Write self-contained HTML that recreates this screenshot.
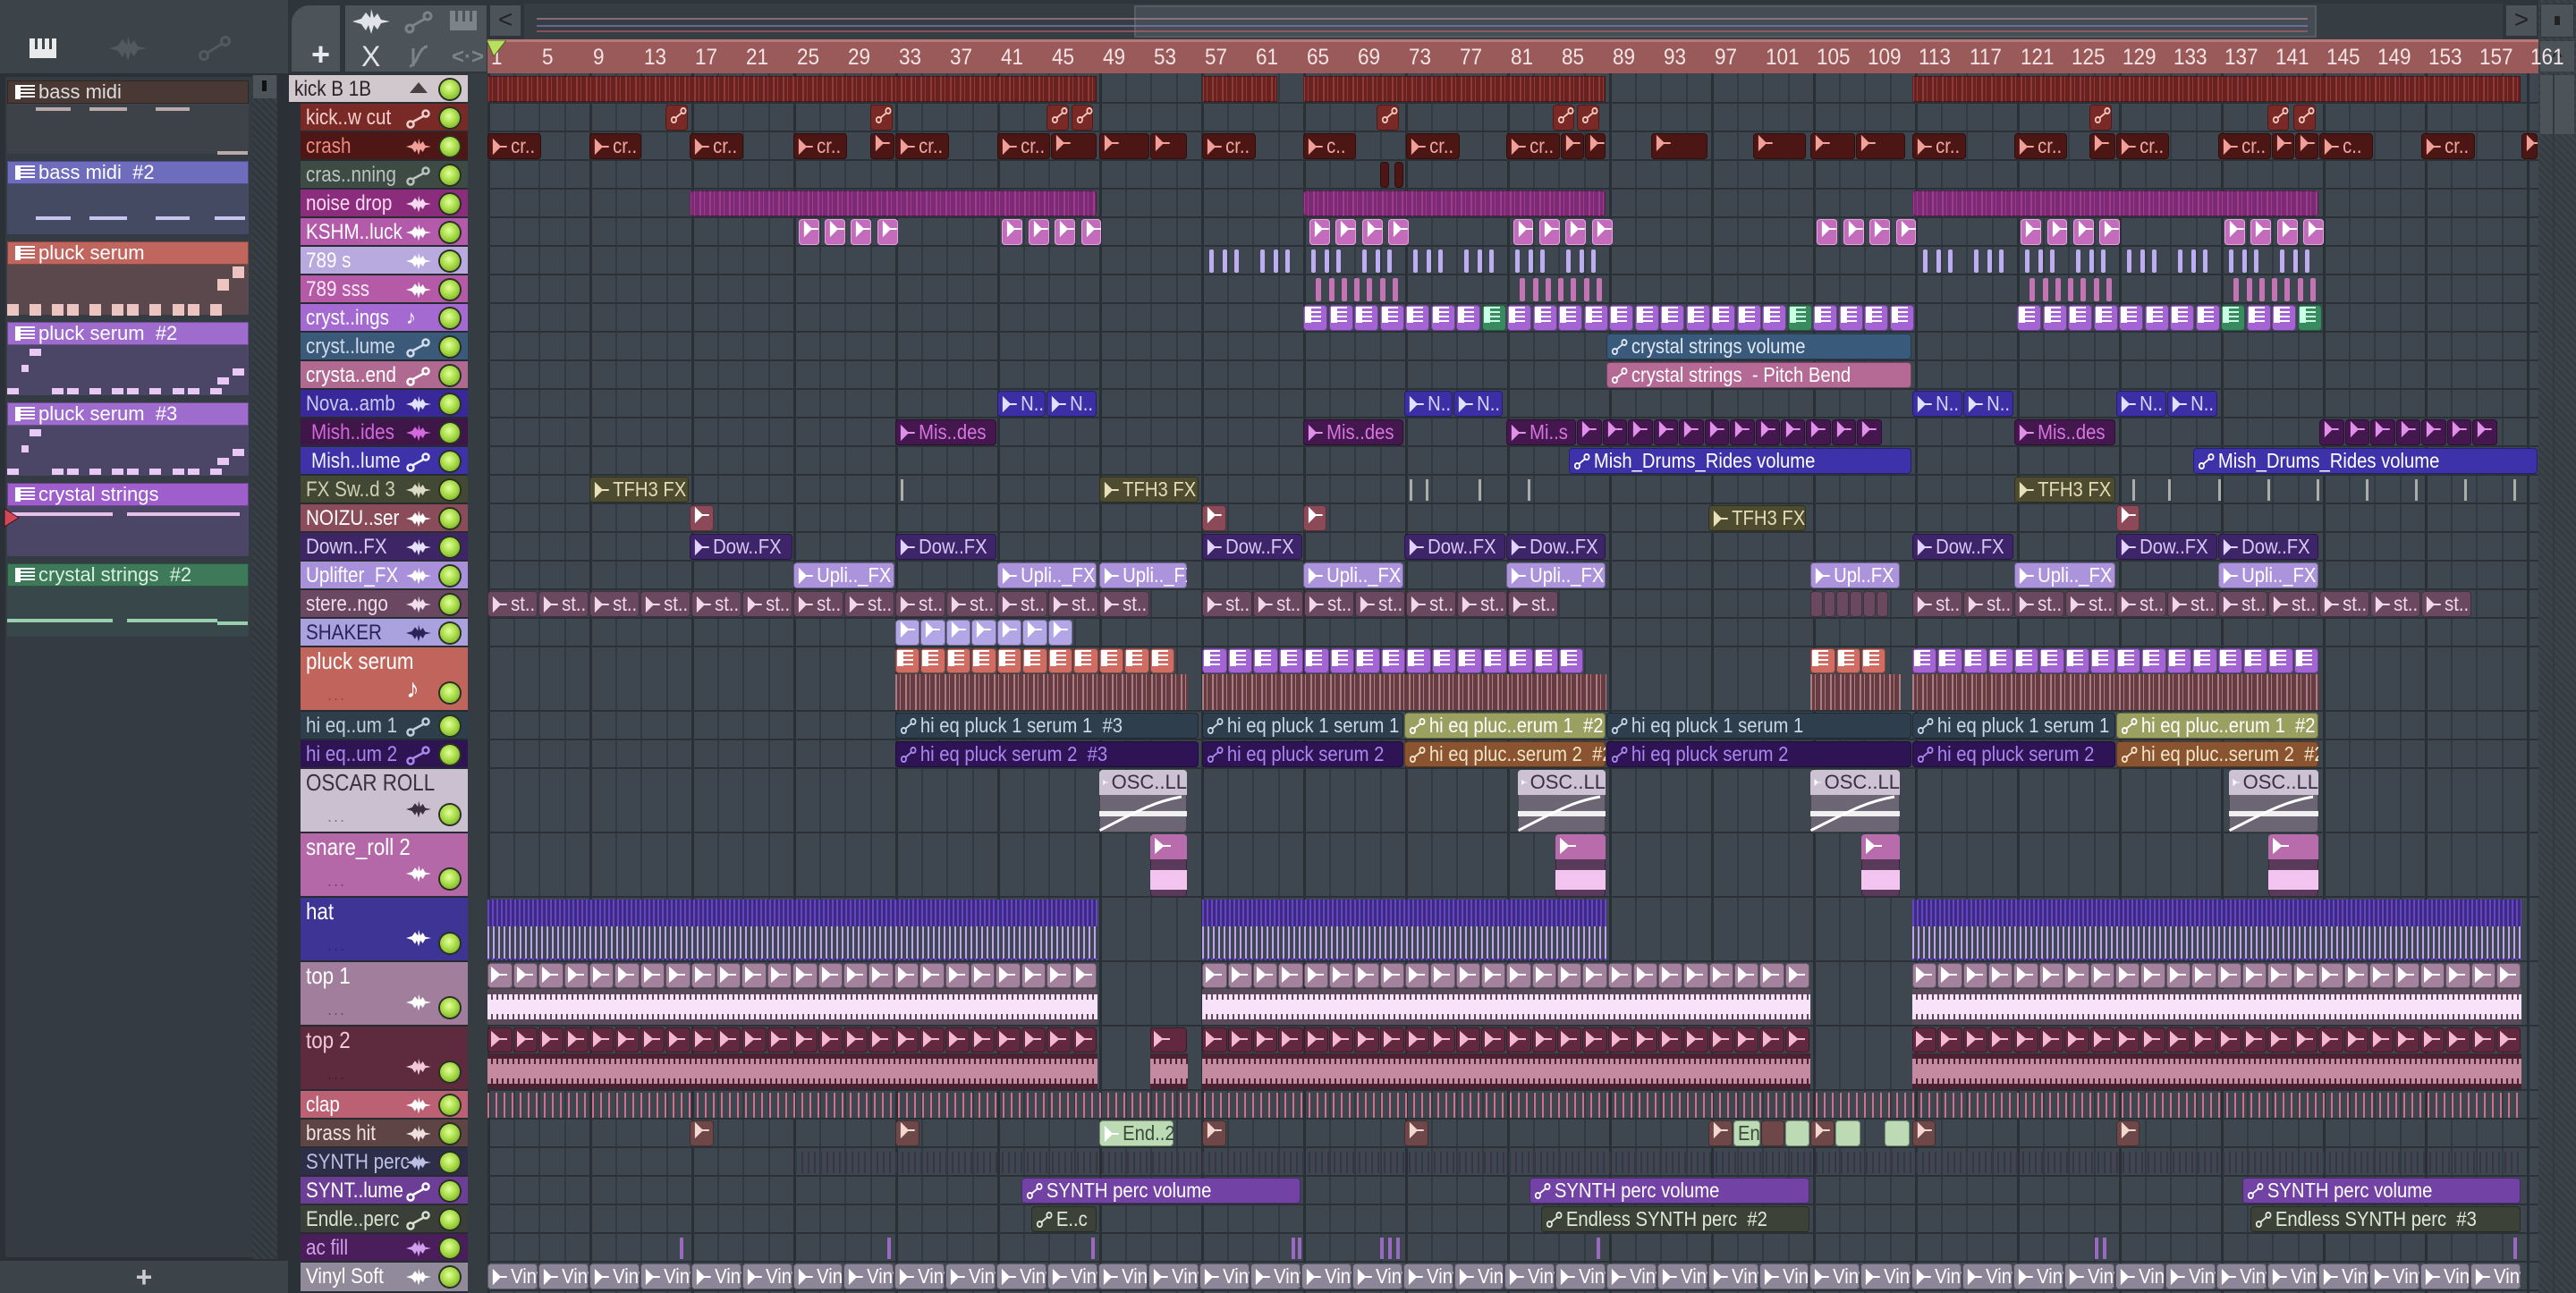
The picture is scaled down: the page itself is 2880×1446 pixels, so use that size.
<!DOCTYPE html>
<html><head><meta charset="utf-8">
<style>
*{box-sizing:border-box;margin:0;padding:0}
body{width:2880px;height:1446px;overflow:hidden;background:#2e353b;font-family:"Liberation Sans",sans-serif;position:relative}
.a{position:absolute}
.c{position:absolute;border-radius:4px;overflow:hidden;white-space:nowrap;box-shadow:inset 0 0 0 1px rgba(0,0,0,.35)}
.lb{position:absolute;left:5px;top:2px;font-size:23px;line-height:25px;display:flex;align-items:center;gap:4px;transform:scaleX(.88);transform-origin:0 50%}
.hd{position:absolute;left:336px;width:187px;border-bottom:2px solid #262c31;overflow:hidden}
.hd .n{position:absolute;left:6px;top:2px;font-size:24px;line-height:27px;white-space:nowrap;transform:scaleX(.86);transform-origin:0 50%}
.hd .i{position:absolute;left:118px;top:6px}
.hd .g{position:absolute;left:156px;top:5px;width:22px;height:22px;border-radius:50%;background:radial-gradient(circle at 45% 40%,#e4ff9c 0,#a8dc48 45%,#6a9e1e 100%);box-shadow:0 0 0 2px #2a3024}
.tall .i{top:auto;bottom:10px}.tall .g{top:auto;bottom:8px}
.tall .n{font-size:26px}
.tall .d{position:absolute;left:30px;bottom:6px;font-size:18px;letter-spacing:2px;opacity:.5}
.pt{position:absolute;left:8px;width:270px;height:82px;border-radius:2px}
.pt .h{height:26px;border:1px solid rgba(0,0,0,.3);font-size:22px;line-height:24px;padding-left:34px;color:#fff;position:relative}
.pt .h:before{content:"";position:absolute;left:8px;top:4px;width:16px;height:16px;background:repeating-linear-gradient(#fff 0 2px,transparent 2px 4px);border-left:6px solid #fff}
.nt{position:absolute;height:5px}
</style></head><body>

<!-- top-left toolbar -->
<div class="a" style="left:0;top:0;width:322px;height:82px;background:#3c4349"></div>
<div class="a" style="left:33px;top:43px;width:30px;height:22px;background:#e8eaec"></div>
<div class="a" style="left:39px;top:43px;width:3px;height:12px;background:#3c4349"></div>
<div class="a" style="left:47px;top:43px;width:3px;height:12px;background:#3c4349"></div>
<div class="a" style="left:55px;top:43px;width:3px;height:12px;background:#3c4349"></div>
<svg class="a" style="left:122px;top:40px" width="42" height="28" viewBox="0 0 42 28"><path d="M0 14 L10 11 L15 4 L20 10 L21 0 L24 10 L28 5 L32 12 L42 14 L32 16 L28 23 L24 18 L21 28 L18 18 L15 24 L10 17Z" fill="#525a60"/></svg>
<svg class="a" style="left:222px;top:40px" width="36" height="28"><circle cx="6" cy="22" r="4.5" fill="none" stroke="#525a60" stroke-width="3"/><circle cx="30" cy="6" r="4.5" fill="none" stroke="#525a60" stroke-width="3"/><path d="M10 19 L26 9" stroke="#525a60" stroke-width="3"/></svg>

<!-- tabs -->
<div class="a" style="left:324px;top:4px;width:58px;height:78px;background:#4c545a;border-radius:22px 0 0 0;border:2px solid #2e353b"></div>
<div class="a" style="left:348px;top:46px;font-size:36px;color:#e8eaec;line-height:30px;font-weight:bold">+</div>
<div class="a" style="left:384px;top:4px;width:162px;height:78px;background:#4c545a;border:2px solid #2e353b"></div>
<svg class="a" style="left:394px;top:10px" width="42" height="28" viewBox="0 0 42 28"><path d="M0 14 L10 11 L15 4 L20 10 L21 0 L24 10 L28 5 L32 12 L42 14 L32 16 L28 23 L24 18 L21 28 L18 18 L15 24 L10 17Z" fill="#e0e4e8"/></svg>
<svg class="a" style="left:452px;top:12px" width="32" height="26"><circle cx="6" cy="20" r="4" fill="none" stroke="#7c848a" stroke-width="3"/><circle cx="26" cy="6" r="4" fill="none" stroke="#7c848a" stroke-width="3"/><path d="M9 17 L23 9" stroke="#7c848a" stroke-width="3"/></svg>
<div class="a" style="left:503px;top:12px;width:30px;height:22px;background:#7c848a"></div>
<div class="a" style="left:509px;top:12px;width:3px;height:12px;background:#4c545a"></div><div class="a" style="left:517px;top:12px;width:3px;height:12px;background:#4c545a"></div><div class="a" style="left:525px;top:12px;width:3px;height:12px;background:#4c545a"></div>
<div class="a" style="left:404px;top:48px;font-size:32px;color:#e0e4e8;line-height:30px">X</div>
<svg class="a" style="left:456px;top:50px" width="24" height="26"><path d="M2 24 C10 24 12 2 22 2 M6 4 V24" stroke="#7c848a" stroke-width="3" fill="none"/></svg>
<div class="a" style="left:505px;top:50px;font-size:24px;color:#7c848a;font-weight:bold">&lt;·&gt;</div>

<!-- overview strip -->
<div class="a" style="left:546px;top:4px;width:38px;height:38px;background:#4c545a;border:2px solid #2e353b;color:#222;font-size:28px;text-align:center;line-height:32px">&lt;</div>
<div class="a" style="left:586px;top:4px;width:2212px;height:40px;background:#363d43"></div>
<div class="a" style="left:1268px;top:6px;width:1322px;height:36px;background:#454d54;border:2px solid #565e64"></div>
<div class="a" style="left:600px;top:20px;width:1980px;height:2px;background:#b88aa8;opacity:.6"></div>
<div class="a" style="left:600px;top:28px;width:1980px;height:2px;background:#9080c8;opacity:.6"></div>
<div class="a" style="left:600px;top:34px;width:1980px;height:2px;background:#c06070;opacity:.6"></div>
<div class="a" style="left:2800px;top:4px;width:38px;height:38px;background:#4c545a;border:2px solid #2e353b;color:#222;font-size:28px;text-align:center;line-height:32px">&gt;</div>
<!-- right scrollbar -->
<div class="a" style="left:2838px;top:0;width:42px;height:1446px;background:repeating-linear-gradient(45deg,#353c42 0 3px,#3c4349 3px 6px)"></div>
<div class="a" style="left:2840px;top:4px;width:38px;height:38px;background:#4c545a;border:1px solid #2e353b"></div>
<div class="a" style="left:2856px;top:18px;width:6px;height:10px;background:#222"></div>
<div class="a" style="left:2840px;top:46px;width:38px;height:34px;background:#4c545a;color:#222;font-size:24px;text-align:center;line-height:38px">^</div>
<div class="a" style="left:2840px;top:84px;width:38px;height:66px;background:#4c545a"></div>

<!-- ruler -->
<div class="a" style="left:545px;top:44px;width:2293px;height:38px;background:#9a5a5a;border-top:3px solid #b87876"></div>
<div id="rul"></div>
<svg class="a" style="left:544px;top:45px" width="22" height="18"><path d="M0 0 H22 L8 18 Z" fill="#b8e060" stroke="#4a6020"/></svg>

<!-- grid area -->
<div class="a" style="left:523px;top:82px;width:22px;height:1364px;background:#353c42"></div>
<div id="grid" class="a" style="left:545px;top:82px;width:2293px;height:1364px;background:#3e474f"></div>

<!-- left pattern panel -->
<div class="a" style="left:0;top:82px;width:322px;height:1328px;background:#2a3036"></div>
<div class="a" style="left:6px;top:86px;width:276px;height:1320px;background:#343b42"></div>
<div class="a" style="left:282px;top:84px;width:28px;height:1324px;background:repeating-linear-gradient(45deg,#30373d 0 3px,#383f45 3px 6px)"></div>
<div class="a" style="left:283px;top:84px;width:26px;height:26px;background:#4c545a"></div>
<div class="a" style="left:293px;top:90px;width:5px;height:12px;background:#111"></div>
<div class="pt" style="top:90px;background:#3c4248"><div class="h" style="background:#4a3834;color:#ddd">bass midi</div></div>
<div class="pt" style="top:180px;background:#434a62"><div class="h" style="background:#6e6cbc">bass midi &nbsp;#2</div></div>
<div class="pt" style="top:270px;background:#5a484c"><div class="h" style="background:#c0665e">pluck serum</div></div>
<div class="pt" style="top:360px;background:#4c4666"><div class="h" style="background:#9e6ccc">pluck serum &nbsp;#2</div></div>
<div class="pt" style="top:450px;background:#4c4666"><div class="h" style="background:#9e6ccc">pluck serum &nbsp;#3</div></div>
<div class="pt" style="top:540px;background:#4c4666"><div class="h" style="background:#9e5ecc">crystal strings</div></div>
<div class="pt" style="top:630px;background:#38484a"><div class="h" style="background:#3e7a5a;color:#d8f0e0">crystal strings &nbsp;#2</div></div>
<div id="pnotes"></div>
<svg class="a" style="left:4px;top:568px" width="18" height="22"><path d="M1 1 L17 11 L1 21Z" fill="#d04858" stroke="#401018"/></svg>
<div class="a" style="left:0;top:1410px;width:322px;height:36px;background:#3c4349;color:#c8ccd0;font-size:32px;text-align:center;line-height:36px;font-weight:bold">+</div>

<!-- header column -->
<div class="a" style="left:322px;top:82px;width:14px;height:1364px;background:#2b3237"></div>

<div class="hd" style="top:84px;height:32px;left:323px;width:200px;background:#d0c8cc"><div class="n" style="color:#2a2428">kick B 1B</div><div class="i" style="left:135px;top:8px;width:0;height:0;border-left:10px solid transparent;border-right:10px solid transparent;border-bottom:12px solid #4a4044"></div><div class="g" style="left:169px"></div></div>
<div class="hd" style="top:116px;height:32px;background:#7a2a26"><div class="n" style="color:#f4d0cc">kick..w cut</div><div class="i" data-t="a" style="color:#f4d0cc"></div><div class="g"></div></div>
<div class="hd" style="top:148px;height:32px;background:#4e1614"><div class="n" style="color:#f08a80">crash</div><div class="i" data-t="w" style="color:#f0a098"></div><div class="g"></div></div>
<div class="hd" style="top:180px;height:32px;background:#3e4a44"><div class="n" style="color:#b8c4bc">cras..nning</div><div class="i" data-t="a" style="color:#b8c4bc"></div><div class="g"></div></div>
<div class="hd" style="top:212px;height:32px;background:#8c2c7c"><div class="n" style="color:#f8d8f0">noise drop</div><div class="i" data-t="w" style="color:#f8d8f0"></div><div class="g"></div></div>
<div class="hd" style="top:244px;height:32px;background:#b45aaa"><div class="n" style="color:#fff">KSHM..luck</div><div class="i" data-t="w" style="color:#fff"></div><div class="g"></div></div>
<div class="hd" style="top:276px;height:32px;background:#b8aade"><div class="n" style="color:#fff">789 s</div><div class="i" data-t="w" style="color:#fff"></div><div class="g"></div></div>
<div class="hd" style="top:308px;height:32px;background:#b45aa6"><div class="n" style="color:#fce8f8">789 sss</div><div class="i" data-t="w" style="color:#fff"></div><div class="g"></div></div>
<div class="hd" style="top:340px;height:32px;background:#a46ad2"><div class="n" style="color:#fff">cryst..ings</div><div class="i" style="color:#fff;font-size:22px;top:2px">♪</div><div class="g"></div></div>
<div class="hd" style="top:372px;height:32px;background:#3b5a7a"><div class="n" style="color:#d0dcea">cryst..lume</div><div class="i" data-t="a" style="color:#d0dcea"></div><div class="g"></div></div>
<div class="hd" style="top:404px;height:32px;background:#b06a92"><div class="n" style="color:#fff">crysta..end</div><div class="i" data-t="a" style="color:#fff"></div><div class="g"></div></div>
<div class="hd" style="top:436px;height:32px;background:#38289a"><div class="n" style="color:#c8ccf4">Nova..amb</div><div class="i" data-t="w" style="color:#e0e0ff"></div><div class="g"></div></div>
<div class="hd" style="top:468px;height:32px;background:#3e1648"><div class="n" style="color:#d468dc;left:12px">Mish..ides</div><div class="i" data-t="w" style="color:#d468dc"></div><div class="g"></div></div>
<div class="hd" style="top:500px;height:32px;background:#3e32a8"><div class="n" style="color:#f0f0ff;left:12px">Mish..lume</div><div class="i" data-t="a" style="color:#f0f0ff"></div><div class="g"></div></div>
<div class="hd" style="top:532px;height:32px;background:#434834"><div class="n" style="color:#cfd0b4">FX Sw..d 3</div><div class="i" data-t="w" style="color:#dcdcc4"></div><div class="g"></div></div>
<div class="hd" style="top:564px;height:32px;background:#8a4c58"><div class="n" style="color:#fff">NOIZU..ser</div><div class="i" data-t="w" style="color:#fff"></div><div class="g"></div></div>
<div class="hd" style="top:596px;height:32px;background:#3e2666"><div class="n" style="color:#d8ccf4">Down..FX</div><div class="i" data-t="w" style="color:#e8e0ff"></div><div class="g"></div></div>
<div class="hd" style="top:628px;height:32px;background:#a890da"><div class="n" style="color:#fff">Uplifter_FX</div><div class="i" data-t="w" style="color:#fff"></div><div class="g"></div></div>
<div class="hd" style="top:660px;height:32px;background:#6a4862"><div class="n" style="color:#f0dcea">stere..ngo</div><div class="i" data-t="w" style="color:#f0dcea"></div><div class="g"></div></div>
<div class="hd" style="top:692px;height:32px;background:#aaa2de"><div class="n" style="color:#2a2458">SHAKER</div><div class="i" data-t="w" style="color:#2a2458"></div><div class="g"></div></div>
<div class="hd tall" style="top:724px;height:72px;background:#c0645c"><div class="n" style="color:#fff">pluck serum</div><div class="i" style="color:#fff;font-size:30px;bottom:6px">♪</div><div class="d" style="color:#6a2a28">...</div><div class="g"></div></div>
<div class="hd" style="top:796px;height:32px;background:#2e3e4a"><div class="n" style="color:#c0d0dc">hi eq..um 1</div><div class="i" data-t="a" style="color:#c0d0dc"></div><div class="g"></div></div>
<div class="hd" style="top:828px;height:32px;background:#2e1452"><div class="n" style="color:#a888ec">hi eq..um 2</div><div class="i" data-t="a" style="color:#a888ec"></div><div class="g"></div></div>
<div class="hd tall" style="top:860px;height:72px;background:#cbc0d0"><div class="n" style="color:#3a3040">OSCAR ROLL</div><div class="i" data-t="w" style="color:#3a3040"></div><div class="d" style="color:#3a3040">...</div><div class="g"></div></div>
<div class="hd tall" style="top:932px;height:72px;background:#b468a8"><div class="n" style="color:#fff">snare_roll 2</div><div class="i" data-t="w" style="color:#fff"></div><div class="d" style="color:#3a1a3a">...</div><div class="g"></div></div>
<div class="hd tall" style="top:1004px;height:72px;background:#3e3496"><div class="n" style="color:#fff">hat</div><div class="i" data-t="w" style="color:#fff"></div><div class="d" style="color:#1a1450">...</div><div class="g"></div></div>
<div class="hd tall" style="top:1076px;height:72px;background:#a07e9c"><div class="n" style="color:#fff">top 1</div><div class="i" data-t="w" style="color:#fff"></div><div class="d" style="color:#3a2a3a">...</div><div class="g"></div></div>
<div class="hd tall" style="top:1148px;height:72px;background:#5e2a3e"><div class="n" style="color:#f0c8d8">top 2</div><div class="i" data-t="w" style="color:#f0c8d8"></div><div class="d" style="color:#2a0a1a">...</div><div class="g"></div></div>
<div class="hd" style="top:1220px;height:32px;background:#bc6074"><div class="n" style="color:#fff">clap</div><div class="i" data-t="w" style="color:#fff"></div><div class="g"></div></div>
<div class="hd" style="top:1252px;height:32px;background:#5e4444"><div class="n" style="color:#f0e0dc">brass hit</div><div class="i" data-t="w" style="color:#f0e0dc"></div><div class="g"></div></div>
<div class="hd" style="top:1284px;height:32px;background:#2e2e48"><div class="n" style="color:#bcc0e4">SYNTH perc</div><div class="i" data-t="w" style="color:#bcc0e4"></div><div class="g"></div></div>
<div class="hd" style="top:1316px;height:32px;background:#6c3e96"><div class="n" style="color:#fff">SYNT..lume</div><div class="i" data-t="a" style="color:#fff"></div><div class="g"></div></div>
<div class="hd" style="top:1348px;height:32px;background:#3a4038"><div class="n" style="color:#d8e0d0">Endle..perc</div><div class="i" data-t="a" style="color:#d8e0d0"></div><div class="g"></div></div>
<div class="hd" style="top:1380px;height:32px;background:#4a1e5a"><div class="n" style="color:#d0a0ec">ac fill</div><div class="i" data-t="w" style="color:#d0a0ec"></div><div class="g"></div></div>
<div class="hd" style="top:1412px;height:34px;background:#908a9a"><div class="n" style="color:#fff">Vinyl Soft</div><div class="i" data-t="w" style="color:#fff"></div><div class="g"></div></div>

<div id="clips"></div>

<script>
const S=1.8367;
const WAVE='<svg width="28" height="20" viewBox="0 0 42 28"><path d="M0 14 L10 11 L15 4 L20 10 L21 0 L24 10 L28 5 L32 12 L42 14 L32 16 L28 23 L24 18 L21 28 L18 18 L15 24 L10 17Z" fill="currentColor"/></svg>';
const AUT='<svg width="28" height="22"><circle cx="5" cy="17" r="3.5" fill="none" stroke="currentColor" stroke-width="2.5"/><circle cx="22" cy="5" r="3.5" fill="none" stroke="currentColor" stroke-width="2.5"/><path d="M8 14 L19 8" stroke="currentColor" stroke-width="2.5"/></svg>';
document.querySelectorAll('.i[data-t]').forEach(e=>{e.innerHTML=e.dataset.t=='w'?WAVE:AUT;});
function si(c){return '<svg width="20" height="18" viewBox="0 0 20 18"><path d="M2 2 L2 16 L10 9 Z M10 9 H19" fill="'+c+'" stroke="'+c+'" stroke-width="2"/></svg>'}
function ai(c){return '<svg width="22" height="20"><circle cx="5" cy="15" r="3" fill="none" stroke="'+c+'" stroke-width="2"/><circle cx="17" cy="5" r="3" fill="none" stroke="'+c+'" stroke-width="2"/><path d="M7 13 L15 7" stroke="'+c+'" stroke-width="2"/></svg>'}
function pi(c){return '<div style="width:18px;height:18px;margin:2px;background:repeating-linear-gradient('+c+' 0 2px,transparent 2px 5px);border-left:7px solid '+c+'"></div>'}
let R='';
for(let n=1;n<=161;n+=4){const x=545+(n-1)*14.25;R+='<div class="a" style="left:'+(x+4)+'px;top:51px;font-size:25px;color:#f4e4e4;line-height:27px;transform:scaleX(.9);transform-origin:0 0">'+n+'</div>';}
document.getElementById('rul').innerHTML=R;
const hs=[];for(let i=0;i<20;i++)hs.push(32);hs.push(72,32,32,72,72,72,72,72);for(let i=0;i<7;i++)hs.push(32);
const tops=[];let yy=84;hs.forEach(h=>{tops.push(yy);yy+=h;});
let G='';
for(let k=0;k<=81;k++){const x=k*28.5;G+='<div class="a" style="left:'+Math.round(x)+'px;top:0;width:'+(k%4==0?3:2)+'px;height:1364px;background:'+(k%4==0?'#283036':'#323a41')+'"></div>';}
tops.forEach((t,i)=>{G+='<div class="a" style="left:0;top:'+(t+hs[i]-84)+'px;width:2293px;height:2px;background:#2a3137"></div>';});
document.getElementById('grid').innerHTML=G;
let H='';
function X(xd){return Math.round(xd*S)}
function clip(r,x1,x2,bg,o){o=o||{};const y=tops[r]+1,h=hs[r]-3;const L=X(x1),W=X(x2)-L-1;
 H+='<div class="c" style="left:'+L+'px;top:'+y+'px;width:'+W+'px;height:'+h+'px;background:'+bg+';'+(o.st||'')+'">'+(o.in||'')+(o.lab!==undefined?'<div class="lb" style="color:'+(o.lc||'#fff')+'">'+(o.ic||'')+o.lab+'</div>':'')+'</div>';}
function run(r,a,b,w,f){for(let x=a;x+w<=b+0.5;x+=w)f(x,Math.min(x+w,b));}
const stripe=(c1,c2)=>'background-image:repeating-linear-gradient(90deg,'+c2+' 0 2px,transparent 2px 5px,'+c2+' 5px 6px,transparent 6px 11px);background-color:'+c1;
[[297,668],[732,778],[793,978],[1164,1535]].forEach(p=>clip(0,p[0],p[1],'#6a2220',{st:stripe('#6a2220','#8e3a36')+';border-radius:0'}));
[405,530,637,652,838,945,960,1272,1380,1396].forEach(x=>clip(1,x,x+14,'#7a2a26',{lab:'',ic:ai('#f4c8c0'),lc:'#fff'}));
[[297,330,'cr..'],[359,391,'cr..'],[420,453,'cr..'],[483,516,'cr..'],[530,545,''],[545,578,'cr..'],[607,640,'cr..'],[640,668,''],[669,700,''],[700,723,''],[732,765,'cr..'],[793,826,'c..'],[856,889,'cr..'],[917,950,'cr..'],[950,965,''],[965,978,''],[1005,1040,''],[1067,1100,''],[1102,1130,''],[1130,1160,''],[1164,1197,'cr..'],[1226,1259,'cr..'],[1272,1288,''],[1288,1321,'cr..'],[1350,1383,'cr..'],[1383,1397,''],[1397,1412,''],[1412,1445,'c..'],[1474,1507,'cr..'],[1535,1545,'']].forEach(p=>clip(2,p[0],p[1],'#4c1614',{lab:p[2],ic:si('#f0a098'),lc:'#f0a8a0'}));
clip(3,840,846,'#4c1614');clip(3,849,855,'#4c1614');
[[420,668],[793,978],[1164,1412]].forEach(p=>clip(4,p[0],p[1],'#7c2a72',{st:stripe('#7c2a72','#9c3c90')}));
[486,502,518,534,610,626,642,658,797,813,829,845,921,937,953,969,1106,1122,1138,1154,1230,1246,1262,1278,1354,1370,1386,1402].forEach(x=>clip(5,x,x+13,'#c46cbc',{lab:'',ic:si('#fff'),st:'box-shadow:inset 0 0 0 1px #e8a0e0'}));
[57,61,65,69,73,77,81,85,113,117,121,125,129,133,137,141].forEach(b=>{[0.65,1.65,2.6].forEach(o=>{const x=545+(b-1+o)*14.25;H+='<div class="a" style="left:'+Math.round(x)+'px;top:'+(tops[6]+3)+'px;width:5px;height:26px;background:#bcaef0;border-radius:2px"></div>';});});
[66,82,122,138].forEach(b=>{for(let k=0;k<7;k++){const x=545+(b-1+k)*14.25;H+='<div class="a" style="left:'+Math.round(x)+'px;top:'+(tops[7]+3)+'px;width:6px;height:26px;background:#c474b4;border-radius:2px"></div>';}});
for(let b=65;b<113;b+=2){const g=(b==79||b==103);const x=545+(b-1)*14.25;H+='<div class="c" style="left:'+Math.round(x)+'px;top:'+(tops[8]+1)+'px;width:27px;height:29px;background:'+(g?'#3a8a60':'#a464d4')+'">'+pi(g?'#c8ffe4':'#fff')+'</div>';}
for(let b=121;b<145;b+=2){const g=(b==137||b==143);const x=545+(b-1)*14.25;H+='<div class="c" style="left:'+Math.round(x)+'px;top:'+(tops[8]+1)+'px;width:27px;height:29px;background:'+(g?'#3a8a60':'#a464d4')+'">'+pi(g?'#c8ffe4':'#fff')+'</div>';}
clip(9,978,1164,'#3a5a7c',{lab:'crystal strings volume',ic:ai('#e0e8f4'),lc:'#e0e8f4'});
clip(10,978,1164,'#b46a94',{lab:'crystal strings &nbsp;- Pitch Bend',ic:ai('#fff')});
[[607,637],[637,668],[855,885],[885,915],[1164,1195],[1195,1226],[1288,1319],[1319,1350]].forEach(p=>clip(11,p[0],p[1],'#3c2ea4',{lab:'N..',ic:si('#e0e0ff'),lc:'#d4d4ff'}));
[[545,607,'Mis..des'],[793,855,'Mis..des'],[917,960,'Mi..s'],[1226,1288,'Mis..des']].forEach(p=>clip(12,p[0],p[1],'#44184e',{lab:p[2],ic:si('#e090e8'),lc:'#d874e0'}));
run(12,960,1150,15.5,(a,b)=>clip(12,a,b,'#44184e',{lab:'',ic:si('#e090e8')}));
run(12,1412,1535,15.5,(a,b)=>clip(12,a,b,'#44184e',{lab:'',ic:si('#e090e8')}));
clip(13,955,1164,'#3e32aa',{lab:'Mish_Drums_Rides volume',ic:ai('#fff')});clip(13,1335,1545,'#3e32aa',{lab:'Mish_Drums_Rides volume',ic:ai('#fff')});
[[359,420],[669,730],[1226,1288]].forEach(p=>clip(14,p[0],p[1],'#4e4c30',{lab:'TFH3 FX',ic:si('#e8e0b8'),lc:'#e4dcb4'}));
[548,858,868,900,930,1298,1320,1350,1380,1410,1440,1470,1500,1530].forEach(x=>H+='<div class="a" style="left:'+X(x)+'px;top:'+(tops[14]+4)+'px;width:3px;height:24px;background:#c8c8c0;opacity:.8"></div>');
[420,732,793,1288].forEach(x=>clip(15,x,x+15,'#8c4a58',{lab:'',ic:si('#fff')}));
clip(15,1040,1100,'#4e4c30',{lab:'TFH3 FX',ic:si('#e8e0b8'),lc:'#e4dcb4'});
[[420,483],[545,607],[732,793],[855,917],[917,978],[1164,1226],[1288,1350],[1350,1412]].forEach(p=>clip(16,p[0],p[1],'#3e2468',{lab:'Dow..FX',ic:si('#e0d4ff'),lc:'#d8c8f8'}));
[[483,545,'Upli.._FX'],[607,668,'Upli.._FX'],[669,723,'Upli.._FX'],[793,855,'Upli.._FX'],[917,978,'Upli.._FX'],[1102,1157,'Upl..FX'],[1226,1288,'Upli.._FX'],[1350,1412,'Upli.._FX']].forEach(p=>clip(17,p[0],p[1],'#ac94dc',{lab:p[2],ic:si('#fff')}));
[[297,700],[732,978],[1164,1535]].forEach(p=>run(18,p[0],p[1],31,(a,b)=>clip(18,a,b,'#6a4860',{lab:'st..',ic:si('#f0d8ea'),lc:'#f0d8ea'})));
run(18,1102,1157,8,(a,b)=>clip(18,a,b,'#6a4860'));
run(19,545,668,15.5,(a,b)=>clip(19,a,b,'#b2a6e6',{lab:'',ic:si('#fff')}));
function pluck(a,b,c){run(20,a,b,15.5,(x1,x2)=>{const L=X(x1),W=X(x2)-L-1;H+='<div class="c" style="left:'+L+'px;top:'+(tops[20]+1)+'px;width:'+W+'px;height:28px;background:'+c+'">'+pi('#fff')+'</div>';});
 const L=X(a),W=X(b)-L;H+='<div class="a" style="left:'+L+'px;top:'+(tops[20]+30)+'px;width:'+W+'px;height:40px;'+stripe('#6a3c40','#b08088')+';opacity:.95"></div>';}
pluck(545,723,'#d06c62');pluck(732,978,'#a464d4');pluck(1102,1157,'#d06c62');pluck(1164,1412,'#a464d4');
[[545,730,'hi eq pluck 1 serum 1 &nbsp;#3','#2e3e4c','#c8d8e4'],[732,855,'hi eq pluck 1 serum 1','#2e3e4c','#c8d8e4'],[855,978,'hi eq pluc..erum 1 &nbsp;#2','#9aa060','#fff'],[978,1164,'hi eq pluck 1 serum 1','#2e3e4c','#c8d8e4'],[1164,1288,'hi eq pluck 1 serum 1','#2e3e4c','#c8d8e4'],[1288,1412,'hi eq pluc..erum 1 &nbsp;#2','#9aa060','#fff']].forEach(p=>clip(21,p[0],p[1],p[3],{lab:p[2],ic:ai(p[4]),lc:p[4]}));
[[545,730,'hi eq pluck serum 2 &nbsp;#3','#2e1454','#a888f0'],[732,855,'hi eq pluck serum 2','#2e1454','#a888f0'],[855,978,'hi eq pluc..serum 2 &nbsp;#2','#8a5430','#f4e4c8'],[978,1164,'hi eq pluck serum 2','#2e1454','#a888f0'],[1164,1288,'hi eq pluck serum 2','#2e1454','#a888f0'],[1288,1412,'hi eq pluc..serum 2 &nbsp;#2','#8a5430','#f4e4c8']].forEach(p=>clip(22,p[0],p[1],p[3],{lab:p[2],ic:ai(p[4]),lc:p[4]}));
[[669,723],[924,978],[1102,1157],[1357,1412]].forEach(p=>{const L=X(p[0]),W=X(p[1])-L-1;H+='<div class="c" style="left:'+L+'px;top:'+(tops[23]+1)+'px;width:'+W+'px;height:70px;background:#6c6674"><div style="height:28px;background:#ccc2d4;color:#3a3040;font-size:22px;line-height:26px;padding-left:4px;display:flex;align-items:center;gap:3px">'+si('#fff')+'OSC..LL</div><svg class="a" style="left:0;top:28px" width="'+W+'" height="42"><path d="M0 40 C'+W*0.4+' 20 '+W*0.6+' 8 '+(W-6)+' 2" stroke="#fff" stroke-width="3" fill="none"/><rect x="0" y="18" width="'+W+'" height="6" fill="#fff" opacity=".9"/></svg></div>';});
[[700,723],[947,978],[1133,1157],[1381,1412]].forEach(p=>{const L=X(p[0]),W=X(p[1])-L-1;H+='<div class="c" style="left:'+L+'px;top:'+(tops[24]+1)+'px;width:'+W+'px;height:70px;background:#5a3a5a"><div style="height:28px;background:#b86cac;padding:4px">'+si('#fff')+'</div><div style="margin:12px 0 0;height:22px;background:#f4c4f0"></div></div>';});
[[297,668],[732,978],[1164,1535]].forEach(p=>{const L=X(p[0]),W=X(p[1])-L;H+='<div class="a" style="left:'+L+'px;top:'+(tops[25]+2)+'px;width:'+W+'px;height:68px;background:repeating-linear-gradient(90deg,#6a44c0 0 2px,#3a2c80 2px 5px)"></div><div class="a" style="left:'+L+'px;top:'+(tops[25]+32)+'px;width:'+W+'px;height:36px;background:repeating-linear-gradient(90deg,#c0a0f0 0 2px,#3e474f 2px 6px)"></div>';});
function tops2(r,segs,hc,bc,wc,ic){segs.forEach(p=>{run(r,p[0],p[1],(p[1]-p[0])/Math.round((p[1]-p[0])/15.5),(a,b)=>{const L=X(a),W=X(b)-L-1;H+='<div class="c" style="left:'+L+'px;top:'+(tops[r]+1)+'px;width:'+W+'px;height:28px;background:'+hc+';padding:4px 3px">'+si(ic)+'</div>';});
 const L=X(p[0]),W=X(p[1])-L;H+='<div class="a" style="left:'+L+'px;top:'+(tops[r]+30)+'px;width:'+W+'px;height:40px;background:'+bc+'"></div><div class="a" style="left:'+L+'px;top:'+(tops[r]+36)+'px;width:'+W+'px;height:28px;background:repeating-linear-gradient(90deg,'+wc+' 0 4px,transparent 4px 6px);"></div><div class="a" style="left:'+L+'px;top:'+(tops[r]+42)+'px;width:'+W+'px;height:16px;background:'+wc+'"></div>';});}
tops2(26,[[297,668],[732,1102],[1164,1535]],'#a4829e','#5a4a5a','#f8e2fa','#fff');
tops2(27,[[297,668],[700,723],[732,1102],[1164,1535]],'#62283e','#4a2232','#c48aa0','#f4b8d0');
H+='<div class="a" style="left:'+X(297)+'px;top:'+(tops[28]+2)+'px;width:'+(X(1535)-X(297))+'px;height:28px;background:repeating-linear-gradient(90deg,#d07088 0 2px,transparent 2px 9px)"></div>';
[420,545,732,855,1040,1102,1164,1288].forEach(x=>clip(29,x,x+15,'#6e4848',{lab:'',ic:si('#f4d8d0')}));
clip(29,669,715,'#bcdab4',{lab:'End..2',ic:si('#fff'),lc:'#3a4a3a'});
clip(29,1055,1072,'#bcdab4',{lab:'End',lc:'#3a4a3a'});clip(29,1072,1087,'#6e4848');clip(29,1087,1102,'#bcdab4');clip(29,1117,1133,'#bcdab4');clip(29,1147,1163,'#bcdab4');
H+='<div class="a" style="left:'+X(484)+'px;top:'+(tops[30]+4)+'px;width:'+(X(1535)-X(484))+'px;height:24px;background:repeating-linear-gradient(90deg,#3a3448 0 2px,transparent 2px 7px)"></div>';
[[622,792],[931,1102],[1365,1535]].forEach(p=>clip(31,p[0],p[1],'#7242a4',{lab:'SYNTH perc volume',ic:ai('#fff')}));
[[628,668,'E..c'],[938,1102,'Endless SYNTH perc &nbsp;#2'],[1370,1535,'Endless SYNTH perc &nbsp;#3']].forEach(p=>clip(32,p[0],p[1],'#3c4238',{lab:p[2],ic:ai('#e0e8d8'),lc:'#e0e8d8'}));
[414,540,664,786,790,840,845,850,972,1275,1280,1530].forEach(x=>H+='<div class="a" style="left:'+X(x)+'px;top:'+(tops[33]+4)+'px;width:4px;height:24px;background:#9a6ac0"></div>');
run(34,297,1535,30.95,(a,b)=>clip(34,a,b,'#8c8698',{lab:'Viny..oft',ic:si('#fff')}));
document.getElementById('clips').innerHTML=H;
let P='';
function n(x,y,w,h,c){P+='<div class="nt" style="left:'+x+'px;top:'+y+'px;width:'+w+'px;height:'+h+'px;background:'+c+'"></div>';}
[[40,39],[100,42],[174,38]].forEach(a=>n(a[0],120,a[1],4,'#b8aaa8'));n(243,169,34,4,'#b8aaa8');
[[40,39],[100,42],[174,38],[240,34]].forEach(a=>n(a[0],242,a[1],4,'#c8c4f0'));
[8,33,58,75,100,125,142,167,193,210,235].forEach(x=>n(x,340,13,13,'#ecc4c0'));n(243,312,13,13,'#ecc4c0');n(260,298,13,13,'#ecc4c0');
[360,450].forEach(y0=>{const c='#e8c8f4';[8,58,75,100,125,142,167,193,210,235].forEach(x=>n(x,y0+74,13,7,c));n(24,y0+48,8,8,c);n(33,y0+30,13,8,c);n(243,y0+62,13,8,c);n(260,y0+52,13,8,c);});
n(8,573,118,4,'#e8c0e8');n(142,573,126,4,'#e8c0e8');
n(8,692,118,4,'#9ad0b0');n(142,692,101,4,'#9ad0b0');n(243,695,34,4,'#9ad0b0');
document.getElementById('pnotes').innerHTML=P;
</script>
</body></html>
